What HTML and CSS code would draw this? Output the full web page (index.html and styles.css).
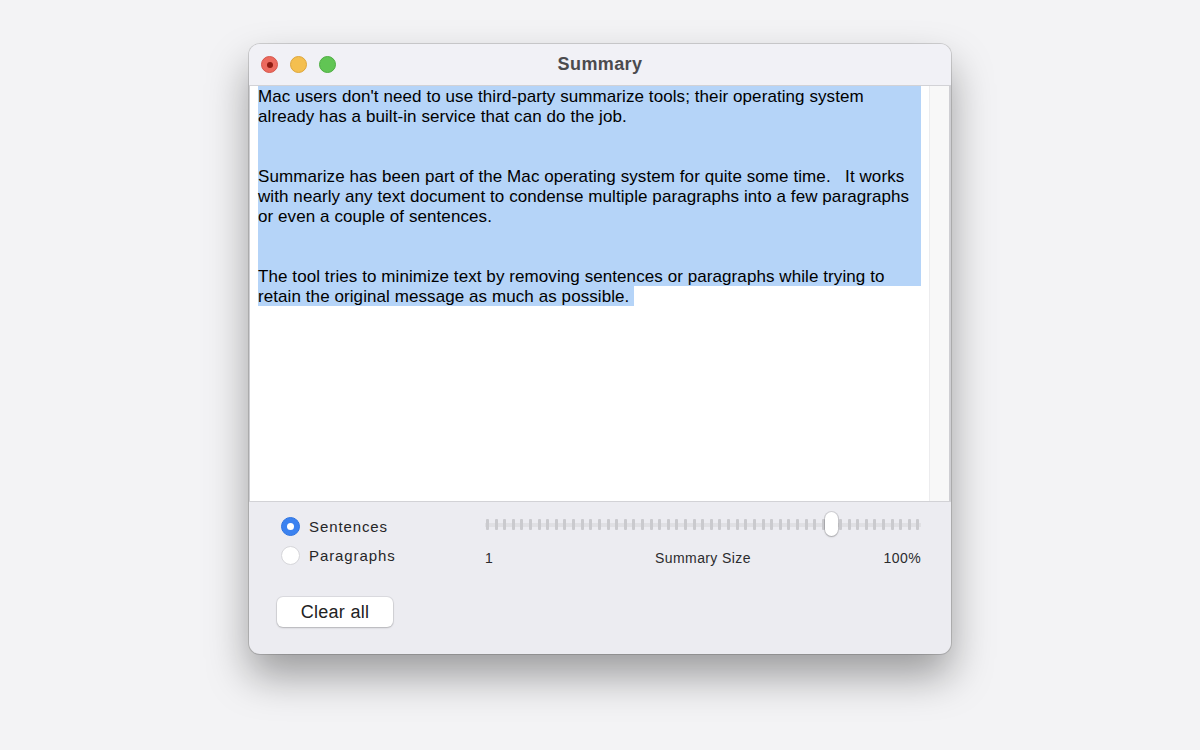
FILE: index.html
```html
<!DOCTYPE html>
<html lang="en">
<head>
    <meta charset="UTF-8">
    <title>Summary</title>
    <link rel="stylesheet" href="styles.css">
</head>
<body>

<div class="window">
    <div class="titlebar">
        <div class="lights">
            <span class="light close"></span>
            <span class="light minimize"></span>
            <span class="light zoom"></span>
        </div>
        <div class="title">Summary</div>
    </div>

    <div class="content">
        <div class="textview">
            <div class="line sel">Mac users don't need to use third-party summarize tools; their operating system</div>
            <div class="line sel">already has a built-in service that can do the job.</div>
            <div class="line sel">&nbsp;</div>
            <div class="line sel">&nbsp;</div>
            <div class="line sel">Summarize has been part of the Mac operating system for quite some time. &nbsp; It works</div>
            <div class="line sel">with nearly any text document to condense multiple paragraphs into a few paragraphs</div>
            <div class="line sel">or even a couple of sentences.</div>
            <div class="line sel">&nbsp;</div>
            <div class="line sel">&nbsp;</div>
            <div class="line sel">The tool tries to minimize text by removing sentences or paragraphs while trying to</div>
            <div class="line"><span class="sel">retain the original message as much as possible.&nbsp;</span></div>
        </div>
        <div class="scrollbar"></div>
    </div>

    <div class="panel">
        <div class="controls">
            <div class="radios">
                <label class="radio checked"><span class="dot"></span>Sentences</label>
                <label class="radio"><span class="dot"></span>Paragraphs</label>
            </div>
            <div class="slider">
                <div class="track">
                    <div class="ticks" id="ticks"></div>
                    <div class="thumb" style="left: 79.4%;"></div>
                </div>
                <div class="scale">
                    <span class="min">1</span>
                    <span class="name">Summary Size</span>
                    <span class="max">100%</span>
                </div>
            </div>
        </div>
        <button class="clear">Clear all</button>
    </div>
</div>

<script>
    // 51 tick marks along the slider
    const ticks = document.getElementById('ticks');
    for (let i = 0; i < 51; i++) {
        const tick = document.createElement('span');
        tick.className = 'tick';
        ticks.appendChild(tick);
    }
</script>

</body>
</html>
```

FILE: styles.css
```css
body {
    margin: 0;
    padding-top: 44px;
    height: 706px;
    background-color: #f3f3f5;
    font-family: "Liberation Sans", Arial, sans-serif;
    display: flex;
    justify-content: center;
    align-items: flex-start;
}

.window {
    width: 702px;
    height: 610px;
    border-radius: 11px;
    overflow: hidden;
    display: flex;
    flex-direction: column;
    background-color: #ececf1;
    box-shadow: 0 0 0 1px rgba(0, 0, 0, 0.14), 0 22px 42px rgba(0, 0, 0, 0.36);
}

.titlebar {
    height: 41px;
    flex: none;
    display: flex;
    align-items: center;
    background-color: #f1f1f6;
    border-bottom: 1px solid #d2d2d6;
    position: relative;
}

.lights {
    display: flex;
    gap: 12px;
    padding-left: 12px;
}

.light {
    width: 17px;
    height: 17px;
    border-radius: 50%;
    box-sizing: border-box;
    display: flex;
    align-items: center;
    justify-content: center;
}

.close {
    background-color: #ec6a5e;
    border: 1px solid #d6574c;
}

.close::after {
    content: "";
    width: 6px;
    height: 6px;
    border-radius: 50%;
    background-color: #8e1c12;
}

.minimize {
    background-color: #f4bf4f;
    border: 1px solid #dea63b;
}

.zoom {
    background-color: #61c554;
    border: 1px solid #4eae42;
}

.title {
    position: absolute;
    left: 0;
    right: 0;
    text-align: center;
    font-size: 18px;
    font-weight: bold;
    letter-spacing: 0.4px;
    color: #4b4b4e;
}

.content {
    height: 415px;
    flex: none;
    display: flex;
    background-color: #fff;
    border-left: 1px solid #cfcfd3;
    border-right: 2px solid #cfcfd3;
}

.textview {
    flex: 1;
    padding: 0 8px;
}

.line {
    height: 20px;
    line-height: 22px;
    font-size: 17px;
    letter-spacing: 0.08px;
    color: #000;
    white-space: pre;
}

.sel {
    background-color: #b5d4f8;
}

.line > .sel {
    display: inline-block;
    height: 20px;
}

.scrollbar {
    width: 19px;
    background-color: #f8f8f8;
    border-left: 1px solid #ececee;
}

.panel {
    flex: 1;
    border-top: 1px solid #d2d2d6;
    padding: 15px 30px 0 28px;
}

.controls {
    display: flex;
}

.radios {
    width: 208px;
    box-sizing: border-box;
    display: flex;
    flex-direction: column;
    gap: 10px;
    padding-left: 4px;
}

.radio {
    display: flex;
    align-items: center;
    gap: 9px;
    font-size: 15px;
    letter-spacing: 0.9px;
    color: #262628;
    height: 19px;
}

.dot {
    width: 19px;
    height: 19px;
    box-sizing: border-box;
    border-radius: 50%;
    background-color: #fff;
    border: 1px solid #d6d6da;
    display: flex;
    align-items: center;
    justify-content: center;
}

.radio.checked .dot {
    background-color: #3b82f0;
    border-color: #2f74e0;
}

.radio.checked .dot::after {
    content: "";
    width: 7px;
    height: 7px;
    border-radius: 50%;
    background-color: #fff;
}

.slider {
    flex: 1;
}

.track {
    position: relative;
    height: 20px;
    margin-top: -3px;
}

.ticks {
    position: absolute;
    left: 0;
    right: 0;
    top: 5px;
    height: 11px;
    padding: 0 1px;
    display: flex;
    justify-content: space-between;
    align-items: center;
    background: linear-gradient(#e0e0e4, #e0e0e4) 0 4px / 100% 4px no-repeat;
}

.tick {
    width: 3px;
    height: 11px;
    border-radius: 1px;
    background-color: #cacace;
}

.thumb {
    position: absolute;
    top: -2px;
    width: 13px;
    height: 24px;
    margin-left: -6px;
    border-radius: 7px;
    background-color: #fff;
    box-shadow: 0 0 0 1px rgba(0, 0, 0, 0.12), 0 1px 2px rgba(0, 0, 0, 0.2);
}

.scale {
    display: grid;
    grid-template-columns: 1fr auto 1fr;
    margin-top: 16px;
    font-size: 14px;
    letter-spacing: 0.4px;
    color: #2b2b2d;
}

.scale .max {
    text-align: right;
}

.clear {
    margin-top: 31px;
    width: 116px;
    height: 30px;
    border: none;
    border-radius: 6px;
    background-color: #fff;
    box-shadow: 0 0 0 1px rgba(0, 0, 0, 0.07), 0 1px 2px rgba(0, 0, 0, 0.18);
    font-family: "Liberation Sans", Arial, sans-serif;
    font-size: 18px;
    letter-spacing: 0.3px;
    color: #222;
    padding: 0;
}
```
